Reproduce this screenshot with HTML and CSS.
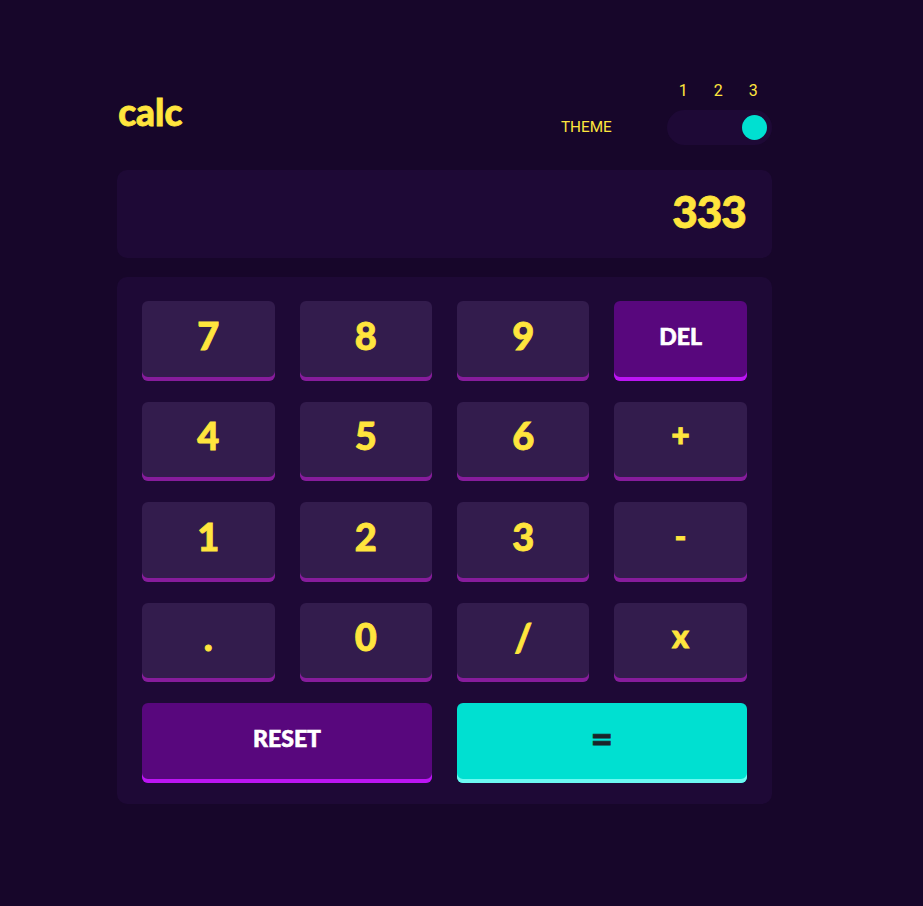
FILE: index.html
```html
<!DOCTYPE html>
<html lang="en">
<head>
    <meta charset="UTF-8">
    <meta name="viewport" content="width=device-width, initial-scale=1.0">
    <title>Calculator</title>
    <link rel="stylesheet" href="styles.css">
</head>
<body>
    <main class="calc">
        <header class="top">
            <h1 class="logo">calc</h1>
            <div class="theme">
                <span class="theme-label">THEME</span>
                <div class="switch">
                    <div class="switch-nums">
                        <span>1</span>
                        <span>2</span>
                        <span>3</span>
                    </div>
                    <div class="switch-track">
                        <div class="switch-knob"></div>
                    </div>
                </div>
            </div>
        </header>
        <div class="screen">333</div>
        <div class="keypad">
            <button class="key">7</button>
            <button class="key">8</button>
            <button class="key">9</button>
            <button class="key key-del">DEL</button>
            <button class="key">4</button>
            <button class="key">5</button>
            <button class="key">6</button>
            <button class="key key-op">+</button>
            <button class="key">1</button>
            <button class="key">2</button>
            <button class="key">3</button>
            <button class="key key-op">-</button>
            <button class="key">.</button>
            <button class="key">0</button>
            <button class="key">/</button>
            <button class="key key-op">x</button>
            <button class="key key-del key-wide">RESET</button>
            <button class="key key-equals key-wide">=</button>
        </div>
    </main>
</body>
</html>
```

FILE: styles.css
```css
* {
    box-sizing: border-box;
}
body {
    margin: 0;
    min-height: 906px;
    background: #17062a;
    font-family: "Lato", "Liberation Sans", sans-serif;
    color: #ffe53d;
}
.calc {
    width: 654.6px;
    margin-left: 117.2px;
    padding-top: 81px;
}
.top {
    display: flex;
    justify-content: space-between;
    align-items: flex-start;
    height: 89px;
}
.logo {
    margin: 11px 0 0 1px;
    font-size: 37px;
    line-height: 40px;
    font-weight: 900;
    -webkit-text-stroke: 0.8px #ffe53d;
}
.theme {
    display: flex;
    align-items: flex-end;
    gap: 55px;
    font-family: "Roboto", sans-serif;
}
.theme-label {
    font-size: 15.3px;
    line-height: 18px;
    margin-bottom: 9px;
}
.switch {
    width: 105px;
}
.switch-nums {
    display: flex;
    justify-content: space-between;
    padding: 0 14px 0 12px;
    height: 29px;
    font-size: 16px;
    line-height: 20px;
}
.switch-track {
    display: flex;
    justify-content: flex-end;
    height: 35px;
    padding: 5px;
    border-radius: 18px;
    background: #1e0936;
}
.switch-knob {
    width: 25px;
    height: 25px;
    border-radius: 50%;
    background: #00e0d1;
}
.screen {
    height: 88px;
    padding: 16px 26px 0 0;
    border-radius: 10px;
    background: #1e0936;
    text-align: right;
    font-size: 44px;
    line-height: 50px;
    font-weight: 900;
    letter-spacing: -1px;
    -webkit-text-stroke: 0.8px #ffe53d;
}
.keypad {
    display: grid;
    grid-template-columns: repeat(4, 132.4px);
    grid-auto-rows: 79.5px;
    gap: 21px 25px;
    height: 527px;
    margin-top: 19px;
    padding: 24px 25px;
    border-radius: 10px;
    background: #1e0936;
}
.key {
    padding: 0 0 12px;
    border: none;
    border-radius: 6px;
    background: #331c4d;
    box-shadow: inset 0 -4px 0 #871c9c;
    color: #ffe53d;
    font-family: inherit;
    font-size: 38px;
    font-weight: 900;
    line-height: 40px;
    -webkit-text-stroke: 0.8px #ffe53d;
}
.key-op {
    font-size: 32px;
}
.key-del {
    padding-bottom: 9px;
    background: #58077d;
    box-shadow: inset 0 -4px 0 #bc15f4;
    color: #fff;
    font-size: 23px;
    -webkit-text-stroke: 0.6px #fff;
}
.key-equals {
    background: #00e0d1;
    box-shadow: inset 0 -4px 0 #6cf9f2;
    color: #1b2428;
    -webkit-text-stroke: 0.8px #1b2428;
}
.key-wide {
    grid-column: span 2;
}
```
